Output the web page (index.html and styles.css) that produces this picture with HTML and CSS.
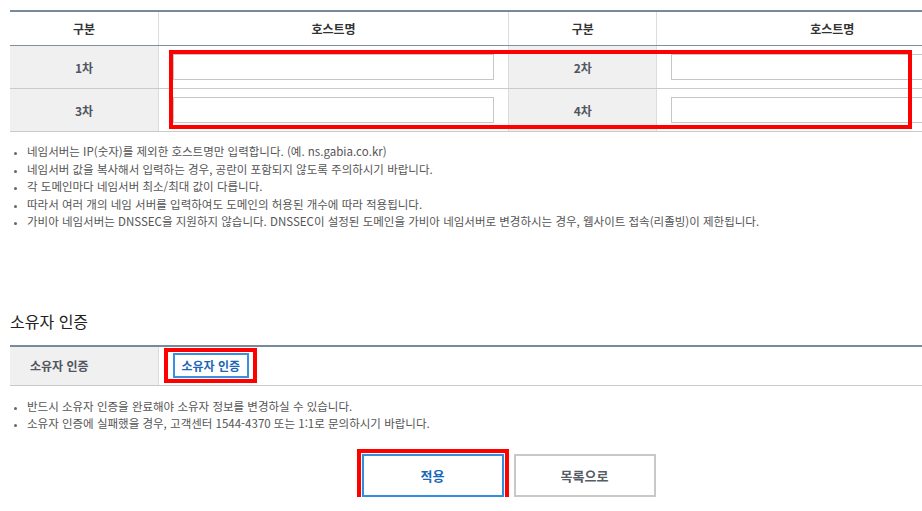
FILE: index.html
```html
<!DOCTYPE html>
<html lang="ko">
<head>
  <meta charset="UTF-8" />
  <meta name="viewport" content="width=device-width, initial-scale=1" />
  <title>네임서버 변경</title>
  <link rel="stylesheet" href="styles.css">
</head>
<body>
  <div class="page">
    <div class="ns-wrap">
      <table class="form-table ns-table">
        <colgroup>
          <col class="col-label" />
          <col class="col-host" />
          <col class="col-label" />
          <col class="col-host" />
        </colgroup>
        <thead>
          <tr>
            <th>구분</th>
            <th>호스트명</th>
            <th>구분</th>
            <th>호스트명</th>
          </tr>
        </thead>
        <tbody>
          <tr>
            <td class="label">1차</td>
            <td class="field"><input type="text" /></td>
            <td class="label">2차</td>
            <td class="field"><input type="text" /></td>
          </tr>
          <tr>
            <td class="label">3차</td>
            <td class="field"><input type="text" /></td>
            <td class="label">4차</td>
            <td class="field"><input type="text" /></td>
          </tr>
        </tbody>
      </table>
      <div class="mark mark-ns"></div>
    </div>

    <ul class="notes">
      <li>네임서버는 IP(숫자)를 제외한 호스트명만 입력합니다. (예. ns.gabia.co.kr)</li>
      <li>네임서버 값을 복사해서 입력하는 경우, 공란이 포함되지 않도록 주의하시기 바랍니다.</li>
      <li>각 도메인마다 네임서버 최소/최대 값이 다릅니다.</li>
      <li>따라서 여러 개의 네임 서버를 입력하여도 도메인의 허용된 개수에 따라 적용됩니다.</li>
      <li>가비아 네임서버는 DNSSEC을 지원하지 않습니다. DNSSEC이 설정된 도메인을 가비아 네임서버로 변경하시는 경우, 웹사이트 접속(리졸빙)이 제한됩니다.</li>
    </ul>

    <h3 class="section-title">소유자 인증</h3>

    <table class="form-table owner-table">
      <colgroup>
        <col class="col-label" />
        <col />
      </colgroup>
      <tbody>
        <tr>
          <td class="label label-left">소유자 인증</td>
          <td class="field">
            <span class="marked">
              <button type="button" class="btn-auth">소유자 인증</button>
            </span>
          </td>
        </tr>
      </tbody>
    </table>

    <ul class="notes notes-owner">
      <li>반드시 소유자 인증을 완료해야 소유자 정보를 변경하실 수 있습니다.</li>
      <li>소유자 인증에 실패했을 경우, 고객센터 1544-4370 또는 1:1로 문의하시기 바랍니다.</li>
    </ul>

    <div class="actions">
      <button type="button" class="btn btn-primary">적용</button>
      <button type="button" class="btn">목록으로</button>
    </div>
  </div>
</body>
</html>
```

FILE: styles.css
```css
html {
  overflow: hidden;
}
body {
  margin: 0;
  background: #fff;
  font-family: "Noto Sans CJK KR", "Noto Sans", "Liberation Sans", sans-serif;
  color: #555;
}
.page {
  width: 997px;
  padding: 10px 0 0 10px;
}

/* tables */
.form-table {
  width: 100%;
  border-collapse: collapse;
  table-layout: fixed;
  border-top: 2px solid #78899b;
}
.col-label {
  width: 148px;
}
.col-host {
  width: 349px;
}
.form-table th {
  height: 33px;
  padding: 0;
  font-size: 12px;
  font-weight: bold;
  color: #333;
  background: #fff;
  border-bottom: 1px solid #7f8ea0;
  border-left: 1px solid #dcdcdc;
}
.form-table th:first-child {
  border-left: 0;
}
.form-table td {
  height: 42px;
  padding: 0;
  border-bottom: 1px solid #cacaca;
  border-left: 1px solid #dcdcdc;
}
.form-table td:first-child {
  border-left: 0;
}
.form-table td.label {
  background: #f0f0f0;
  text-align: center;
  font-size: 12px;
  font-weight: bold;
  color: #505560;
}
.form-table td.label-left {
  text-align: left;
  padding-left: 20px;
}
.form-table td.field {
  padding: 0 14px 0 14px;
}
.form-table input[type="text"] {
  display: block;
  width: 100%;
  height: 26px;
  margin: 0;
  border: 1px solid #c6c6c6;
  box-sizing: border-box;
  background: #fff;
}

/* red marks */
.ns-wrap {
  position: relative;
}
.mark {
  position: absolute;
  border: 4px solid #f00;
  box-sizing: border-box;
  pointer-events: none;
}
.mark-ns {
  left: 159px;
  top: 40px;
  width: 743px;
  height: 79px;
}
.marked {
  display: inline-block;
  padding: 1px 4px 1px 5px;
  border: 4px solid #f00;
  margin-left: -9px;
  line-height: 0;
}

/* notes */
.notes {
  margin: 11px 0 0 0;
  padding: 0 0 0 17px;
  font-size: 11.5px;
  line-height: 17.5px;
  color: #555;
}
.notes li::marker {
  font-size: 9px;
  color: #666;
}
.notes-owner {
  margin-top: 12px;
}

.section-title {
  margin: 79px 0 0 0;
  font-size: 16px;
  font-weight: normal;
  line-height: 22px;
  color: #222;
}
.owner-table {
  margin-top: 13px;
}
.owner-table td {
  height: 38px;
}
.btn-auth {
  height: 25px;
  padding: 0 7px;
  border: 2px solid #3a90e0;
  background: #fff;
  color: #1a66b8;
  font-family: inherit;
  font-size: 12px;
  font-weight: bold;
  line-height: 20px;
}

/* bottom buttons */
.actions {
  display: flex;
  justify-content: center;
  gap: 10px;
  margin-top: 21px;
}
.btn {
  width: 142px;
  height: 43px;
  border: 2px solid #c8c8c8;
  background: #fff;
  color: #555c66;
  font-family: inherit;
  font-size: 13px;
  font-weight: bold;
}
.btn-primary {
  border-color: #2f8fe0;
  color: #1a66b8;
  outline: 4px solid #f00;
  outline-offset: 1px;
}
```
